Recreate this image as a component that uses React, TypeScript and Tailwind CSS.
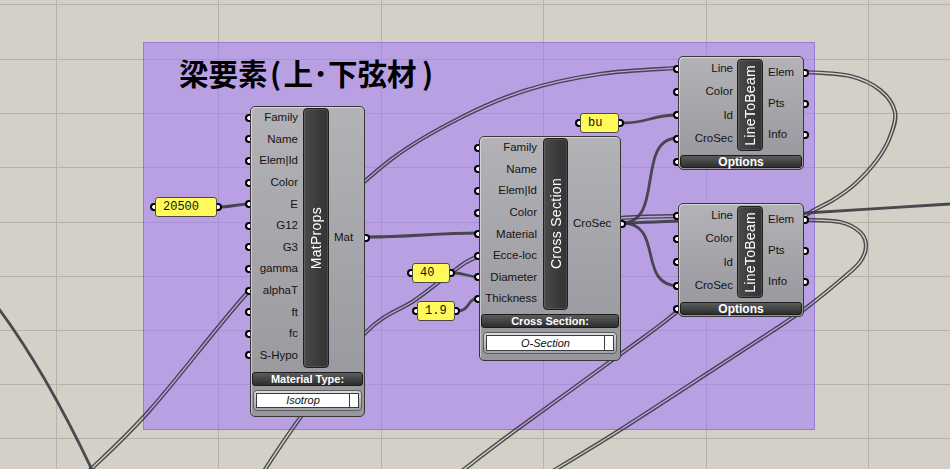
import React from 'react';

type Pt = [number, number];

// catmull-rom through points -> cubic bezier path
const smooth = (pts: Pt[]) => {
  let d = `M${pts[0][0]} ${pts[0][1]}`;
  for (let i = 0; i < pts.length - 1; i++) {
    const p0 = pts[i - 1] ?? pts[i];
    const p1 = pts[i];
    const p2 = pts[i + 1];
    const p3 = pts[i + 2] ?? p2;
    const c1x = p1[0] + (p2[0] - p0[0]) / 6;
    const c1y = p1[1] + (p2[1] - p0[1]) / 6;
    const c2x = p2[0] - (p3[0] - p1[0]) / 6;
    const c2y = p2[1] - (p3[1] - p1[1]) / 6;
    d += ` C${c1x.toFixed(1)} ${c1y.toFixed(1)} ${c2x.toFixed(1)} ${c2y.toFixed(1)} ${p2[0]} ${p2[1]}`;
  }
  return d;
};

const listWires: Pt[][] = [
  [[86, 474], [150, 410], [248, 292], [320, 222], [393, 158], [460, 118], [527, 90], [600, 74], [678, 68]],
  [[262, 474], [300, 418], [365, 333], [415, 300], [455, 270], [479, 256], [560, 226], [621, 218], [679, 216]],
  [[806, 72], [850, 76], [880, 90], [895, 112], [890, 137], [877, 160], [855, 184], [833, 200], [806, 215], [740, 262], [678, 311], [640, 340], [516, 430], [458, 474]],
  [[806, 220], [840, 222], [860, 232], [866, 246], [860, 262], [843, 278], [806, 308], [780, 326], [731, 358], [620, 430], [548, 474]],
];

const itemWires: string[] = [
  'M-4 305 Q45 370 94 474',
  'M219 207 C232 207 237 204 250 204',
  'M367 237 C410 237 436 233 479 233',
  'M454 273 C465 273 468 277 479 277',
  'M458 311 C470 311 467 298 479 298',
  'M622 123 C650 123 650 115 678 115',
  'M622 223 C665 223 635 138 678 138',
  'M622 223 C665 223 636 286 679 286',
  smooth([[622, 223], [700, 220], [806, 213], [950, 204]]),
];

const gridX = [56, 218, 381, 543, 706, 868];
const gridY = [4, 59, 113, 167, 222, 276, 330, 384, 438];

const InGrip = () => (
  <span className="absolute left-[-6px] top-1/2 -translate-y-1/2 w-[5px] h-[8px] rounded-l-full border-2 border-r-0 border-black bg-white" />
);

const OutGrip = () => (
  <span className="absolute right-[-6px] top-1/2 -translate-y-1/2 w-[5px] h-[8px] rounded-r-full border-2 border-l-0 border-black bg-white" />
);

const Capsule = ({ label, className }: { label: string; className: string }) => (
  <div
    className={`${className} rounded-[4px] border border-[#1e1e1e] bg-gradient-to-r from-[#4b4b4b] via-[#3d3d3d] to-[#343434] shadow-[inset_0_0_0_1px_rgba(255,255,255,0.12)] flex items-center justify-center`}
  >
    <span className="[writing-mode:vertical-rl] rotate-180 text-white text-[14px] leading-none tracking-[0.3px] whitespace-nowrap">
      {label}
    </span>
  </div>
);

const Footer = ({ label, className }: { label: string; className: string }) => (
  <div
    className={`${className} rounded-[3px] border border-[#1c1c1c] bg-gradient-to-b from-[#5c5c5c] to-[#2e2e2e] flex items-center justify-center text-white font-bold text-[11px] leading-none`}
  >
    {label}
  </div>
);

const Dropdown = ({ value, className }: { value: string; className: string }) => (
  <div
    className={`${className} rounded-[4px] border border-[#5e5e5e] bg-gradient-to-b from-[#dcdce0] to-[#a0a0a6] p-[2px] flex`}
  >
    <div className="flex-1 flex bg-white border border-[#3c3c3c]">
      <div className="flex-1 flex items-center justify-center italic text-[11px] text-[#111]">{value}</div>
      <div className="w-[9px] border-l border-[#3c3c3c] bg-white" />
    </div>
  </div>
);

const Panel = ({ text, className }: { text: string; className: string }) => (
  <div
    className={`${className} absolute rounded-[3px] border border-[#4a4a4a] bg-[#fffa5a] flex items-center pl-[7px] font-['Liberation_Mono',monospace] text-[12px] text-[#111] leading-none`}
  >
    <span className="absolute left-[-6px] top-1/2 -translate-y-1/2 w-[5px] h-[8px] rounded-l-full border-2 border-r-0 border-black bg-white" />
    {text}
    <span className="absolute right-[-6px] top-1/2 -translate-y-1/2 w-[5px] h-[8px] rounded-r-full border-2 border-l-0 border-black bg-white" />
  </div>
);

const nodeBody =
  'absolute rounded-[5px] border border-[#383838] bg-gradient-to-b from-[#b2b2b7] to-[#96969c] shadow-[inset_1px_1px_0_rgba(255,255,255,0.45)] flex flex-col';

const matInputs = ['Family', 'Name', 'Elem|Id', 'Color', 'E', 'G12', 'G3', 'gamma', 'alphaT', 'ft', 'fc', 'S-Hypo'];
const csInputs = ['Family', 'Name', 'Elem|Id', 'Color', 'Material', 'Ecce-loc', 'Diameter', 'Thickness'];
const ltbInputs = ['Line', 'Color', 'Id', 'CroSec'];
const ltbOutputs = ['Elem', 'Pts', 'Info'];

const LineToBeam = ({ className }: { className: string }) => (
  <div className={`${nodeBody} ${className} w-[126px] h-[114px]`}>
    <div className="flex h-[96px]">
      <div className="w-[54px] flex flex-col">
        {ltbInputs.map((l) => (
          <div key={l} className="relative h-[23.3px] flex items-center justify-end">
            <InGrip />
            {l}
          </div>
        ))}
      </div>
      <Capsule label="LineToBeam" className="ml-[4px] mt-[2px] w-[26px] h-[92px]" />
      <div className="flex-1 flex flex-col pl-[5px]">
        {ltbOutputs.map((l) => (
          <div key={l} className="relative h-[31px] flex items-center">
            {l}
            <OutGrip />
          </div>
        ))}
      </div>
    </div>
    <div className="relative mt-[2px]">
      <InGrip />
      <Footer label="Options" className="mx-[1px] h-[13px] text-[12px]" />
    </div>
  </div>
);

export default function App() {
  return (
    <div className="relative w-[950px] h-[469px] overflow-hidden bg-[#d4d0c8] font-['Liberation_Sans',Arial,sans-serif] text-[11.5px] text-[#141414]">
      {/* canvas grid */}
      <svg className="absolute inset-0" width={950} height={469}>
        {gridX.map((x) => (
          <line key={`x${x}`} x1={x + 0.5} y1={0} x2={x + 0.5} y2={469} stroke="#b6b2aa" strokeWidth={1} />
        ))}
        {gridY.map((y) => (
          <line key={`y${y}`} x1={0} y1={y + 0.5} x2={950} y2={y + 0.5} stroke="#b6b2aa" strokeWidth={1} />
        ))}
      </svg>

      {/* group */}
      <div className="absolute left-[143px] top-[42px] w-[672px] h-[388px] bg-[rgba(160,120,250,0.55)] border border-[rgba(110,80,190,0.45)] pl-[35px] pt-[15px]">
        <div className="flex items-center font-['Noto_Sans_CJK_JP',sans-serif] font-bold text-[29.5px] leading-none text-black whitespace-nowrap">
          <span>梁要素</span>
          <span className="inline-block w-[16px] text-center">(</span>
          <span>上</span>
          <span className="inline-block w-[15px] text-center">･</span>
          <span>下弦材</span>
          <span className="inline-block w-[22px] text-center">)</span>
        </div>
      </div>

      {/* wires */}
      <svg className="absolute inset-0" width={950} height={469}>
        <defs>
          {listWires.map((w, i) => (
            <mask key={i} id={`wm${i}`} maskUnits="userSpaceOnUse" x={0} y={0} width={950} height={469}>
              <rect width={950} height={469} fill="white" />
              <path d={smooth(w)} stroke="black" strokeWidth={1.4} fill="none" />
            </mask>
          ))}
        </defs>
        {itemWires.map((d, i) => (
          <path key={`s${i}`} d={d} stroke="#3f3d44" strokeOpacity={0.92} strokeWidth={2.8} fill="none" />
        ))}
        {listWires.map((w, i) => (
          <path
            key={`l${i}`}
            d={smooth(w)}
            stroke="#3b3940"
            strokeOpacity={0.9}
            strokeWidth={4.2}
            fill="none"
            mask={`url(#wm${i})`}
          />
        ))}
      </svg>

      {/* MatProps */}
      <div className={`${nodeBody} left-[250px] top-[106px] w-[115px] h-[311px]`}>
        <div className="flex h-[262px]">
          <div className="w-[47px] flex flex-col">
            {matInputs.map((l) => (
              <div key={l} className="relative h-[21.6px] flex items-center justify-end">
                <InGrip />
                {l}
              </div>
            ))}
          </div>
          <Capsule label="MatProps" className="ml-[5px] mt-[1px] w-[26px] h-[260px]" />
          <div className="flex-1 flex flex-col justify-center pl-[5px]">
            <div className="relative h-[20px] flex items-center">
              Mat
              <OutGrip />
            </div>
          </div>
        </div>
        <Footer label="Material Type:" className="mx-[1px] mt-[3px] h-[14px]" />
        <Dropdown value="Isotrop" className="mx-[2px] mt-[4px] h-[21px]" />
      </div>

      {/* Cross Section */}
      <div className={`${nodeBody} left-[479px] top-[136px] w-[142px] h-[225px]`}>
        <div className="flex h-[174px]">
          <div className="w-[57px] flex flex-col">
            {csInputs.map((l) => (
              <div key={l} className="relative h-[21.6px] flex items-center justify-end">
                <InGrip />
                {l}
              </div>
            ))}
          </div>
          <Capsule label="Cross Section" className="ml-[6px] mt-[1px] w-[25px] h-[172px]" />
          <div className="flex-1 flex flex-col justify-center pl-[5px]">
            <div className="relative h-[20px] flex items-center">
              CroSec
              <OutGrip />
            </div>
          </div>
        </div>
        <Footer label="Cross Section:" className="mx-[1px] mt-[3px] h-[14px]" />
        <Dropdown value="O-Section" className="mx-[3px] mt-[4px] h-[22px]" />
      </div>

      <LineToBeam className="left-[678px] top-[56px]" />
      <LineToBeam className="left-[678px] top-[203px]" />

      <Panel text="20500" className="left-[155px] top-[197px] w-[62px] h-[20px]" />
      <Panel text="40" className="left-[412px] top-[263px] w-[38px] h-[20px]" />
      <Panel text="1.9" className="left-[417px] top-[301px] w-[38px] h-[20px]" />
      <Panel text="bu" className="left-[580px] top-[113px] w-[39px] h-[20px]" />
    </div>
  );
}
